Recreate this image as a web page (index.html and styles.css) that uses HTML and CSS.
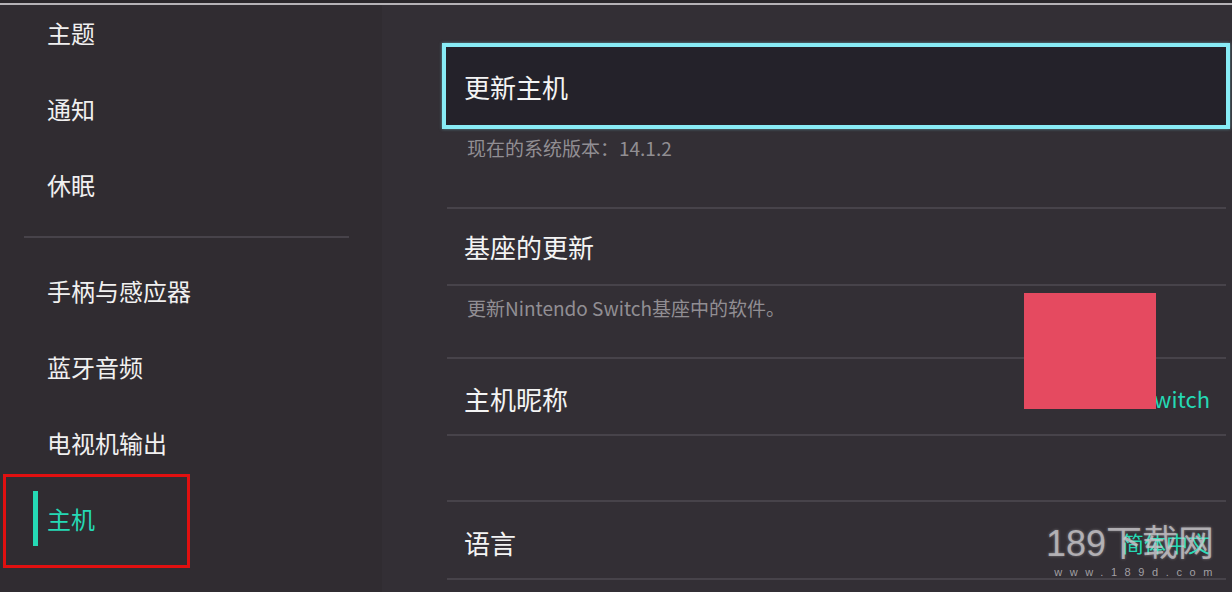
FILE: index.html
```html
<!DOCTYPE html>
<html lang="zh-CN">
<head>
<meta charset="utf-8">
<title>主机设置</title>
<link rel="stylesheet" href="styles.css">
</head>
<body>
<div class="topbar"></div>
<div class="screen">
  <nav class="sidebar">
    <ul class="group group-first">
      <li class="item">主题</li>
      <li class="item">通知</li>
      <li class="item">休眠</li>
    </ul>
    <div class="side-divider"></div>
    <ul class="group">
      <li class="item">手柄与感应器</li>
      <li class="item">蓝牙音频</li>
      <li class="item">电视机输出</li>
      <li class="item active">主机<span class="annot"></span></li>
    </ul>
  </nav>
  <main class="content">
    <div class="focus-row">更新主机</div>
    <div class="desc desc-first">现在的系统版本：14.1.2</div>
    <div class="row row-dock">基座的更新</div>
    <div class="desc desc-dock">更新Nintendo Switch基座中的软件。</div>
    <div class="row row-name"><span>主机昵称</span><span class="value">Nintendo Switch</span><span class="redact"></span></div>
    <div class="spacer"></div>
    <div class="row row-lang"><span>语言</span><span class="value">简体中文</span></div>
    <div class="watermark">
      <div class="wm-big">189下载网</div>
      <div class="wm-small">www.189d.com</div>
    </div>
  </main>
</div>
</body>
</html>
```
FILE: styles.css
```css
* { box-sizing: border-box; }
html, body { margin: 0; padding: 0; }
body {
  width: 1232px;
  height: 592px;
  overflow: hidden;
  background: #332f35;
  font-family: "Noto Sans CJK SC", "Noto Sans", sans-serif;
  color: #f2f2f2;
}
.topbar {
  height: 5px;
  background: #2a272b;
  border-bottom: 2px solid #b5b2b6;
}
.screen {
  display: flex;
  height: 587px;
  overflow: hidden;
}
.sidebar {
  width: 382px;
  flex: none;
  background: #302c31;
  overflow: hidden;
}
.group {
  list-style: none;
  margin: 0;
  padding: 0;
}
.group-first { margin-top: -10px; }
.item {
  position: relative;
  height: 76px;
  line-height: 76px;
  padding-left: 47px;
  font-size: 24px;
  color: #f0f0f0;
}
.item.active { color: #25d9b4; }
.item.active::before {
  content: "";
  position: absolute;
  left: 33px;
  top: 10px;
  width: 5px;
  height: 55px;
  background: #25d9b4;
}
.annot {
  position: absolute;
  left: 3px;
  top: -7px;
  width: 187px;
  height: 94px;
  border: 3px solid #e01010;
}
.side-divider {
  height: 2px;
  margin: 13px 33px 15px 24px;
  background: #47434a;
}
.content {
  position: relative;
  margin-left: 60px;
  width: 788px;
  padding-top: 38px;
  display: flex;
  flex-direction: column;
}
.focus-row {
  height: 86px;
  border: 4px solid #88ecf6;
  background: #24222a;
  padding-left: 18px;
  display: flex;
  align-items: center;
  font-size: 26px;
  color: #f4f4f4;
  box-shadow: 0 0 3px rgba(136,236,246,0.5);
}
.desc, .row, .spacer {
  margin: 0 4px 0 5px;
  border-bottom: 2px solid #47434a;
}
.desc {
  padding-left: 20px;
  font-size: 19px;
  line-height: 24px;
  color: #918e93;
}
.desc-first { height: 80px; padding-top: 7px; }
.desc-dock { height: 73px; padding-top: 10px; }
.row {
  position: relative;
  display: flex;
  align-items: center;
  justify-content: space-between;
  padding: 0 16px 0 17px;
  font-size: 26px;
  color: #f4f4f4;
}
.row-dock { height: 77px; }
.row-name { height: 77px; padding-top: 3px; }
.row-lang { height: 78px; padding-top: 4px; }
.spacer { height: 66px; }
.value {
  font-size: 22px;
  color: #25d9b4;
}
.redact {
  position: absolute;
  left: 577px;
  top: -66px;
  width: 132px;
  height: 116px;
  background: #e54a60;
}
.watermark {
  position: absolute;
  left: 582px;
  top: 518px;
  width: 190px;
  text-align: right;
  white-space: nowrap;
  pointer-events: none;
}
.wm-big {
  font-family: "Liberation Sans", "Noto Sans CJK SC", sans-serif;
  font-size: 36px;
  line-height: 42px;
  color: rgba(200, 198, 202, 0.78);
  text-shadow: 0 0 3px rgba(255,255,255,0.35);
}
.wm-small {
  font-family: "Liberation Sans", sans-serif;
  font-size: 11px;
  line-height: 14px;
  letter-spacing: 7.6px;
  margin-right: -6px;
  color: rgba(200, 198, 202, 0.75);
}
```
